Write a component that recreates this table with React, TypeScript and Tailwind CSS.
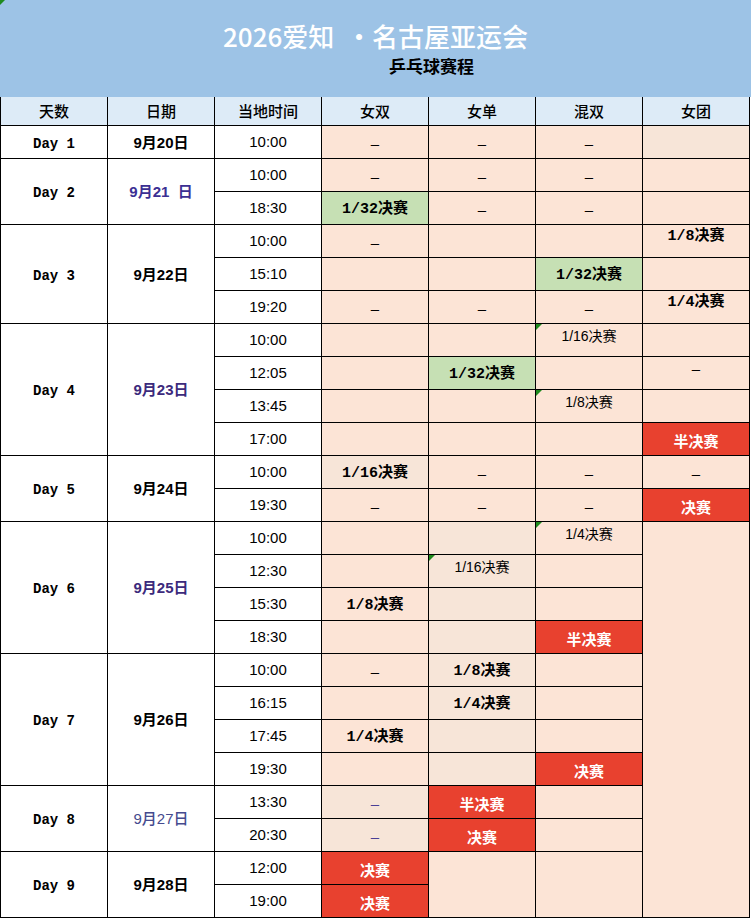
import * as React from "react";

type Kind = "empty" | "dash" | "bold" | "reg" | "red";
type Bg = "peach" | "beige" | "green" | "red";

interface EventCell {
  kind: Kind;
  text?: string;
  bg?: Bg;
  span?: number;
  // top aligned like the spreadsheet's default for some cells
  top?: boolean;
  // little green error marker in the top-left corner
  tri?: boolean;
  purple?: boolean;
}

interface Day {
  label: string;
  date: string;
  dateClass: string;
  times: string[];
}

const days: Day[] = [
  { label: "Day 1", date: "9月20日", dateClass: "font-bold text-black", times: ["10:00"] },
  { label: "Day 2", date: "9月21  日", dateClass: "font-semibold text-[#3b2f93]", times: ["10:00", "18:30"] },
  { label: "Day 3", date: "9月22日", dateClass: "font-bold text-black", times: ["10:00", "15:10", "19:20"] },
  { label: "Day 4", date: "9月23日", dateClass: "font-bold text-[#3c2a7c]", times: ["10:00", "12:05", "13:45", "17:00"] },
  { label: "Day 5", date: "9月24日", dateClass: "font-bold text-black", times: ["10:00", "19:30"] },
  { label: "Day 6", date: "9月25日", dateClass: "font-bold text-[#3c2a7c]", times: ["10:00", "12:30", "15:30", "18:30"] },
  { label: "Day 7", date: "9月26日", dateClass: "font-bold text-black", times: ["10:00", "16:15", "17:45", "19:30"] },
  { label: "Day 8", date: "9月27日", dateClass: "font-medium text-[#454a8e]", times: ["13:30", "20:30"] },
  { label: "Day 9", date: "9月28日", dateClass: "font-bold text-black", times: ["12:00", "19:00"] },
];

const E: EventCell = { kind: "empty" };
const D: EventCell = { kind: "dash" };
const green = (text: string): EventCell => ({ kind: "bold", text, bg: "green" });
const red = (text: string): EventCell => ({ kind: "red", text, bg: "red" });
const bold = (text: string, bg?: Bg): EventCell => ({ kind: "bold", text, bg });
const reg = (text: string): EventCell => ({ kind: "reg", text, top: true, tri: true });

// one entry per time row: 女双, 女单, 混双, 女团 (null = covered by a merged cell)
const events: (EventCell | null)[][] = [
  [D, D, D, { kind: "empty", bg: "beige" }],
  [D, D, D, E],
  [green("1/32决赛"), D, D, E],
  [D, E, E, { kind: "bold", text: "1/8决赛", top: true }],
  [E, E, green("1/32决赛"), E],
  [D, D, D, { kind: "bold", text: "1/4决赛", top: true }],
  [E, E, reg("1/16决赛"), E],
  [E, green("1/32决赛"), E, { kind: "dash", top: true }],
  [E, E, reg("1/8决赛"), E],
  [E, E, E, red("半决赛")],
  [bold("1/16决赛", "beige"), D, D, D],
  [D, D, D, red("决赛")],
  [E, { kind: "empty", bg: "beige" }, reg("1/4决赛"), { kind: "empty", span: 12 }],
  [E, { kind: "reg", text: "1/16决赛", top: true, tri: true, bg: "beige" }, E, null],
  [bold("1/8决赛"), { kind: "empty", bg: "beige" }, E, null],
  [E, { kind: "empty", bg: "beige" }, red("半决赛"), null],
  [D, bold("1/8决赛", "beige"), E, null],
  [E, bold("1/4决赛", "beige"), E, null],
  [bold("1/4决赛"), { kind: "empty", bg: "beige" }, E, null],
  [E, { kind: "empty", bg: "beige" }, red("决赛"), null],
  [{ kind: "dash", bg: "beige", purple: true }, red("半决赛"), E, null],
  [{ kind: "dash", bg: "beige", purple: true }, red("决赛"), E, null],
  [red("决赛"), { kind: "empty", span: 2 }, { kind: "empty", span: 2 }, null],
  [red("决赛"), null, null, null],
];

const spanClass: Record<number, string> = {
  1: "",
  2: "row-span-2",
  3: "row-span-3",
  4: "row-span-4",
  12: "row-span-12",
};

const bgClass: Record<Bg, string> = {
  peach: "bg-[#fce4d6]",
  beige: "bg-[#f7e5d8]",
  green: "bg-[#c6e0b4]",
  red: "bg-[#e8412f]",
};

const headers = ["天数", "日期", "当地时间", "女双", "女单", "混双", "女团"];

function Event({ cell }: { cell: EventCell }) {
  const bg = bgClass[cell.bg ?? "peach"];
  const align = cell.top ? "items-start pt-[2px]" : "items-center pt-[3px]";
  let content: React.ReactNode = null;

  if (cell.kind === "dash") {
    content = (
      <span
        className={`font-['Liberation_Sans',sans-serif] text-[15px] leading-5 ${
          cell.purple ? "text-[#4b3f96]" : "text-black"
        }`}
      >
        –
      </span>
    );
  } else if (cell.kind === "bold") {
    content = (
      <span className="font-['Liberation_Mono','Noto_Sans_CJK_SC',monospace] text-[15px] font-bold leading-5 text-black">
        {cell.text}
      </span>
    );
  } else if (cell.kind === "reg") {
    content = (
      <span className="font-['Liberation_Sans','Noto_Sans_CJK_SC',sans-serif] text-[14px] leading-5 text-black">
        {cell.text}
      </span>
    );
  } else if (cell.kind === "red") {
    content = (
      <span className="font-['Noto_Sans_CJK_SC',sans-serif] text-[15px] font-bold leading-5 text-white">
        {cell.text}
      </span>
    );
  }

  return (
    <div
      className={`relative flex justify-center ${align} ${bg} ${spanClass[cell.span ?? 1]}`}
    >
      {cell.tri && (
        <span className="absolute left-0 top-0 h-0 w-0 border-r-[6px] border-t-[6px] border-r-transparent border-t-[#1e8a1e]" />
      )}
      {content}
    </div>
  );
}

export default function App() {
  const cells: React.ReactNode[] = [];
  let row = 0;

  days.forEach((day) => {
    day.times.forEach((time, i) => {
      if (i === 0) {
        cells.push(
          <div
            key={`day-${row}`}
            className={`flex items-center justify-center bg-white pt-[4px] font-['Liberation_Mono',monospace] text-[14px] font-bold text-black ${spanClass[day.times.length]}`}
          >
            {day.label}
          </div>,
        );
        cells.push(
          <div
            key={`date-${row}`}
            className={`flex items-center justify-center whitespace-pre bg-white pt-[2px] font-['Liberation_Sans','Noto_Sans_CJK_SC',sans-serif] text-[15px] ${day.dateClass} ${spanClass[day.times.length]}`}
          >
            {day.date}
          </div>,
        );
      }
      cells.push(
        <div
          key={`time-${row}`}
          className="flex items-center justify-center bg-white pt-[1px] font-['Liberation_Sans',sans-serif] text-[15px] text-black"
        >
          {time}
        </div>,
      );
      events[row].forEach((cell, c) => {
        if (cell) cells.push(<Event key={`ev-${row}-${c}`} cell={cell} />);
      });
      row += 1;
    });
  });

  return (
    <div className="min-h-[919px] w-[751px] bg-white">
      <div className="relative flex h-[97px] flex-col items-center bg-[#9dc3e6] pt-[22px]">
        <span className="absolute left-0 top-0 h-0 w-0 border-r-[5px] border-t-[5px] border-r-transparent border-t-[#1e8a1e]" />
        <h1 className="whitespace-pre font-['Noto_Sans_CJK_SC',sans-serif] text-[26px] font-medium leading-[28px] text-white">
          2026爱知  ·名古屋亚运会
        </h1>
        <h2 className="ml-[112px] mt-[7px] font-['Noto_Sans_CJK_SC',sans-serif] text-[17px] font-bold leading-[18px] text-black">
          乒乓球赛程
        </h2>
      </div>

      <div className="grid w-[750px] grid-cols-[repeat(7,106px)] grid-rows-[28px_repeat(24,32px)] gap-px border-x border-b border-black bg-black">
        {headers.map((h) => (
          <div
            key={h}
            className="flex items-center justify-center bg-[#ddebf7] font-['Noto_Sans_CJK_SC',sans-serif] text-[15px] font-medium text-black"
          >
            {h}
          </div>
        ))}
        {cells}
      </div>
    </div>
  );
}
